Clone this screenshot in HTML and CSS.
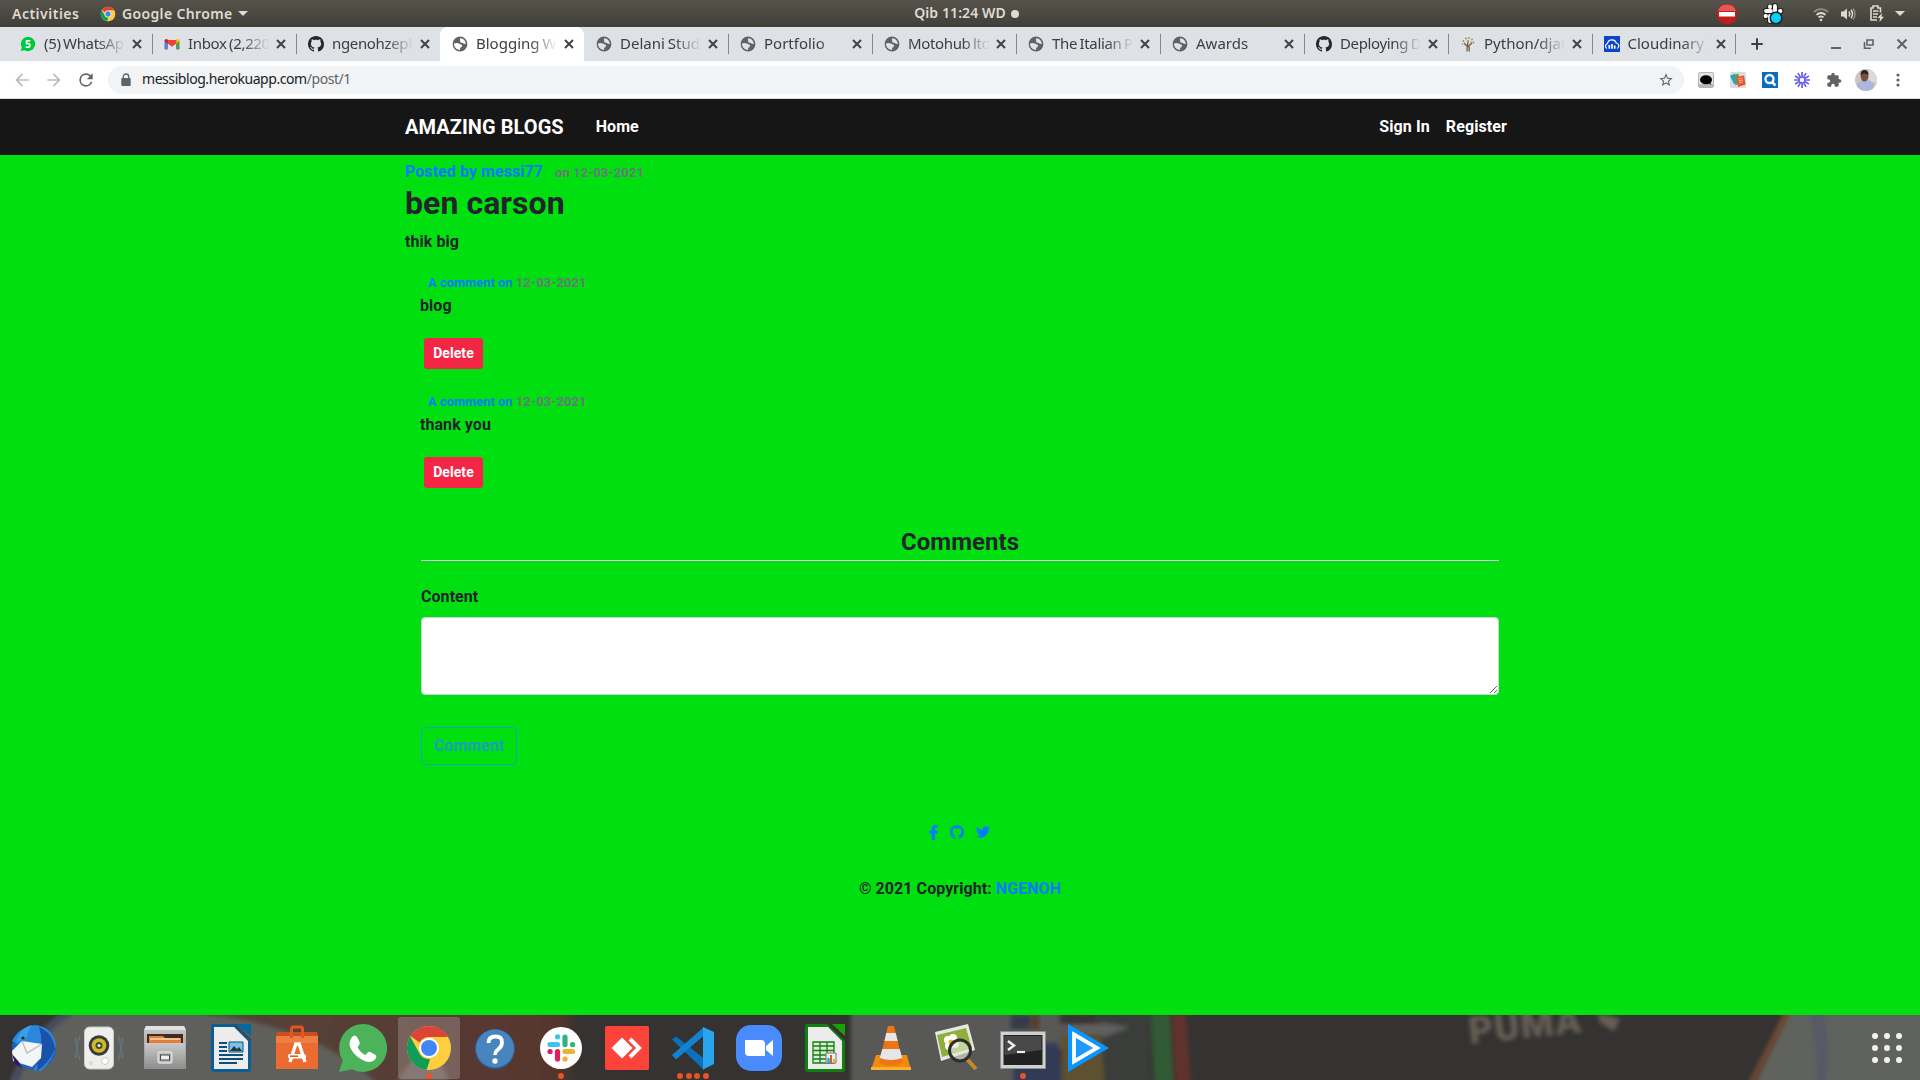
FILE: index.html
```html
<!DOCTYPE html>
<html lang="en">
<head>
<meta charset="utf-8">
<title>Blogging Website</title>
<link rel="stylesheet" href="styles.css">
</head>
<body>
<svg class="defs" width="0" height="0" aria-hidden="true">
  <defs>
    <symbol id="close" viewBox="0 0 16 16"><path d="M4 4l8 8M12 4l-8 8" stroke="currentColor" stroke-width="1.9" fill="none"/></symbol>
    <symbol id="globe" viewBox="0 0 16 16"><circle cx="8" cy="8" r="7.4" fill="#5f6368"/><path class="land" d="M8.6 2.2c2.7.2 5 2.500 5.200 5.300-.9.900-2 .4-2.600-.2-.8-.7-2.200-.4-2.900-1.300-.6-.8.100-1.500-.3-2.100-.2-.6.100-1.300.6-1.700zM1.900 7.600c1.700-.9 4.300-.8 5.500.2 1 .8 2.500.4 2.700 1.600.2 1.500-1.600 1.500-1.900 2.700-.2.800.2 1.500-.5 2C4.500 13.800 1.900 11 1.900 7.600z"/></symbol>
    <symbol id="github" viewBox="0 0 16 16"><path fill="currentColor" d="M8 0C3.58 0 0 3.58 0 8c0 3.54 2.29 6.53 5.47 7.59.4.07.55-.17.55-.38 0-.19-.01-.82-.01-1.49-2.01.37-2.53-.49-2.69-.94-.09-.23-.48-.94-.82-1.13-.28-.15-.68-.52-.01-.53.63-.01 1.08.58 1.23.82.72 1.21 1.87.87 2.33.66.07-.52.28-.87.51-1.07-1.78-.2-3.64-.89-3.64-3.95 0-.87.31-1.59.82-2.15-.08-.2-.36-1.02.08-2.12 0 0 .67-.21 2.2.82.64-.18 1.32-.27 2-.27.68 0 1.36.09 2 .27 1.53-1.04 2.2-.82 2.2-.82.44 1.1.16 1.92.08 2.12.51.56.82 1.27.82 2.15 0 3.07-1.87 3.75-3.65 3.95.29.25.54.73.54 1.48 0 1.07-.01 1.93-.01 2.2 0 .21.15.46.55.38A8.013 8.013 0 0016 8c0-4.42-3.58-8-8-8z"/></symbol>
    <symbol id="chrome" viewBox="0 0 48 48"><circle cx="24" cy="24" r="22" fill="#ffcd40"/><path d="M24 2a22 22 0 0 1 19.100 11H24a11 11 0 0 0-9.500 5.500L5.600 12A22 22 0 0 1 24 2z" fill="#db4437"/><path d="M5.200 12.600L14.500 29.500A11 11 0 0 0 25 35l-3 10.900A22 22 0 0 1 5.200 12.600z" fill="#0f9d58"/><path d="M33.500 29.500L25 46h-3.500l4.500-11z" fill="#ffcd40"/><circle cx="24" cy="24" r="10" fill="#fff"/><circle cx="24" cy="24" r="8" fill="#4285f4"/></symbol>
  </defs>
</svg>

<header class="topbar">
  <div class="topbar-left">
    <span class="activities">Activities</span>
    <svg class="ico16" viewBox="0 0 48 48"><use href="#chrome"/></svg>
    <span class="appname">Google Chrome</span>
    <i class="caret"></i>
  </div>
  <div class="clock"><span>Qib 11:24 WD</span><i class="dot"></i></div>
  <div class="tray">
    <svg class="t-stop" width="22" height="22" viewBox="0 0 22 22"><circle cx="11" cy="11" r="10.300" fill="#c41c1c"/><path d="M2 8a9.500 9.500 0 0 1 18 0z" fill="#e35a55"/><rect x="3" y="9" width="16" height="4.500" fill="#fff"/></svg>
    <svg class="t-slack" width="22" height="22" viewBox="0 0 22 22"><g stroke="#222" stroke-width="6" stroke-linecap="round"><path d="M4 8h5M8 4v1M13 3v5M18 8h.5M4 13h.5M8 13v5"/></g><g stroke="#fff" stroke-width="3.800" stroke-linecap="round"><path d="M4 8h5M8 3.500v.5M13 3v5M18 8h.5M3.500 13h.5M8 13v5"/></g><circle cx="14" cy="15" r="5.800" fill="#00d2ff" stroke="#222" stroke-width="1.500"/></svg>
    <svg class="t-wifi" width="16" height="16" viewBox="0 0 16 16" fill="none" stroke="#dfdbd2" stroke-width="1.800"><path d="M1 6a10 10 0 0 1 14 0" opacity=".45"/><path d="M3.500 8.800a6.500 6.500 0 0 1 9 0M5.500 11.400a4 4 0 0 1 5 0"/><circle cx="8" cy="14" r="1.300" fill="#dfdbd2" stroke="none"/></svg>
    <svg class="t-sound" width="16" height="16" viewBox="0 0 16 16" fill="none" stroke="#dfdbd2" stroke-width="1.500"><path d="M1 5.500h2.500L7 2.500v11l-3.500-3H1z" fill="#dfdbd2" stroke="none"/><path d="M9 5.500q1.600 2.500 0 5M11 3.800q3 4.200 0 8.400"/><path d="M13 2.500q4 5.500 0 11" opacity=".45"/></svg>
    <svg class="t-batt" width="16" height="17" viewBox="0 0 16 17" fill="none" stroke="#dfdbd2" stroke-width="1.600"><path d="M8 15H2V3h2V1h5v2h2.500v4.500M4 6h5.500M4 9h5M4 12h4"/><path d="M13 8l-4.500 5h2.500l-.5 4 4.500-5.200h-2.500z" fill="#dfdbd2" stroke="none"/></svg>
    <i class="caret"></i>
  </div>
</header>

<nav class="tabs">
  <div class="tab"><svg class="fav" viewBox="0 0 16 16"><path d="M8 .8a7.200 7.200 0 1 1-3.500 13.500L.8 15l1-3.400A7.200 7.200 0 0 1 8 .8z" fill="#00c843"/><text x="8" y="11.800" text-anchor="middle" font-size="10.500" font-weight="700" font-family="Noto Sans, sans-serif" fill="#fff">5</text></svg><span class="title tight">(5) WhatsAp</span><svg class="x"><use href="#close"/></svg></div>
  <div class="tab"><svg class="fav" viewBox="0 0 16 16"><path d="M.7 4v9.200h3V7.500L8 10.700l4.300-3.200v5.700h3V4z" fill="#ea4335"/><path d="M.7 6v7.200h3V7.500z" fill="#4285f4"/><path d="M12.300 7.500v5.700h3V5.500z" fill="#34a853"/><path d="M12.300 3.400v4.100l3-2.200V4.200q-1.200-2-3-.8z" fill="#fbbc04"/><path d="M.7 4.200v1.300l3 2V3.400q-1.800-1.200-3 .8z" fill="#c5221f"/></svg><span class="title tight">Inbox (2,220</span><svg class="x"><use href="#close"/></svg></div>
  <div class="tab noline"><svg class="fav gh"><use href="#github"/></svg><span class="title tight">ngenohzeph</span><svg class="x"><use href="#close"/></svg></div>
  <div class="tab active noline"><svg class="fav"><use href="#globe"/></svg><span class="title">Blogging W</span><svg class="x"><use href="#close"/></svg></div>
  <div class="tab"><svg class="fav"><use href="#globe"/></svg><span class="title">Delani Stud</span><svg class="x"><use href="#close"/></svg></div>
  <div class="tab"><svg class="fav"><use href="#globe"/></svg><span class="title">Portfolio</span><svg class="x"><use href="#close"/></svg></div>
  <div class="tab"><svg class="fav"><use href="#globe"/></svg><span class="title tight">Motohub ltd</span><svg class="x"><use href="#close"/></svg></div>
  <div class="tab"><svg class="fav"><use href="#globe"/></svg><span class="title tight">The Italian P</span><svg class="x"><use href="#close"/></svg></div>
  <div class="tab"><svg class="fav"><use href="#globe"/></svg><span class="title">Awards</span><svg class="x"><use href="#close"/></svg></div>
  <div class="tab"><svg class="fav gh"><use href="#github"/></svg><span class="title tight">Deploying D</span><svg class="x"><use href="#close"/></svg></div>
  <div class="tab narrow"><svg class="fav" viewBox="0 0 16 16"><path d="M7 15.500l.3-5L4 7M7.500 10L8 5M8 10.500L12 7M9.300 15.500L9 10" stroke="#7b5a3c" stroke-width="1.300" fill="none"/><g fill="#8aa05f"><circle cx="3.500" cy="5" r="1"/><circle cx="6" cy="2.500" r="1"/><circle cx="9" cy="2" r="1"/><circle cx="12" cy="3.500" r="1"/><circle cx="13.500" cy="6.500" r="1"/><circle cx="8" cy="5" r="1"/><circle cx="2.500" cy="8" r=".8"/><circle cx="11" cy="6.300" r=".8"/></g></svg><span class="title">Python/djar</span><svg class="x"><use href="#close"/></svg></div>
  <div class="tab narrow"><svg class="fav" viewBox="0 0 16 16"><path d="M0 0h16v16H0z" fill="#0c45cc"/><path d="M3 12.500a2.700 2.700 0 0 1 .5-5A4.600 4.600 0 0 1 12.300 7a2.900 2.900 0 0 1 .9 5.500" fill="none" stroke="#fff" stroke-width="1.200"/><path d="M5.300 9v3.700M8 8v4.700M10.700 9.500v3.200" stroke="#fff" stroke-width="1.700"/></svg><span class="title">Cloudinary I</span><svg class="x"><use href="#close"/></svg></div>
  <svg class="newtab" width="16" height="16" viewBox="0 0 16 16"><path d="M8 2.300v11.400M2.300 8h11.400" stroke="#3c4043" stroke-width="2"/></svg>
  <div class="winbtns">
    <svg width="16" height="16" viewBox="0 0 16 16"><path d="M3 12h10" stroke="#5f6368" stroke-width="2"/></svg>
    <svg width="16" height="16" viewBox="0 0 16 16" fill="none" stroke="#5f6368" stroke-width="1.600"><path d="M6 4h6v5H6zM3.500 6v6.200H10"/></svg>
    <svg width="16" height="16" viewBox="0 0 16 16"><path d="M3.500 3.500l9 9M12.500 3.500l-9 9" stroke="#5f6368" stroke-width="2"/></svg>
  </div>
</nav>

<div class="toolbar">
  <svg class="nav" viewBox="0 0 24 24"><path fill="#babcbe" d="M20 11H7.830l5.590-5.590L12 4l-8 8 8 8 1.410-1.410L7.830 13H20v-2z"/></svg>
  <svg class="nav" viewBox="0 0 24 24"><path fill="#babcbe" d="M12 4l-1.410 1.410L16.170 11H4v2h12.170l-5.580 5.590L12 20l8-8z"/></svg>
  <svg class="nav" viewBox="0 0 24 24"><path fill="#5f6368" d="M17.650 6.350A7.958 7.958 0 0 0 12 4a8 8 0 1 0 7.730 10h-2.080A6 6 0 1 1 12 6c1.660 0 3.140.69 4.220 1.780L13 11h7V4l-2.350 2.350z"/></svg>
  <div class="omnibox">
    <svg class="lock" width="14" height="14" viewBox="0 0 14 14"><rect x="2.300" y="5" width="9.400" height="8" rx="1" fill="#5f6368"/><path d="M4.300 5.500V3.700a2.700 2.700 0 0 1 5.400 0v1.800" fill="none" stroke="#5f6368" stroke-width="1.300"/></svg>
    <span class="url">messiblog.herokuapp.com<span>/post/1</span></span>
    <svg class="star" viewBox="0 0 24 24"><path fill="#5f6368" d="M22 9.240l-7.190-.62L12 2 9.190 8.630 2 9.240l5.460 4.730L5.820 21 12 17.270 18.180 21l-1.630-7.030L22 9.240zM12 15.400l-3.760 2.270 1-4.280-3.320-2.880 4.380-.38L12 6.100l1.710 4.040 4.380.38-3.320 2.880 1 4.280L12 15.400z"/></svg>
  </div>
  <div class="exts">
    <svg viewBox="0 0 16 16"><rect x=".5" y=".5" width="15" height="15" rx="1.500" fill="#e2e2e2" stroke="#b5b5b5"/><path d="M1 12h14v3H1z" fill="#b9b9b9"/><ellipse cx="8" cy="7.700" rx="6" ry="4.500"/><path d="M10 10l2.500 3 .5-4z"/></svg>
    <svg viewBox="0 0 16 16"><rect width="16" height="16" rx="1.500" fill="#dcdcdc"/><path d="M0 4l5-2.500 2 9.500-3 1z" fill="#1ea0d8"/><path d="M3 3.500l5.500-2 1 9-4 3z" fill="#35b06a"/><path d="M6 5l8-1.500 1.500 9L8 15z" fill="#f05030"/><path d="M8 7l4.500-1M8.500 9l4.500-1M9 11l3.500-1" stroke="#ffc0b0" stroke-width=".9"/></svg>
    <svg viewBox="0 0 16 16"><path d="M0 0h16v16H0z" fill="#0a6ebd"/><circle cx="7.500" cy="7" r="4" fill="none" stroke="#fff" stroke-width="2.300"/><path d="M10 10l3.500 3.500" stroke="#fff" stroke-width="2.500"/></svg>
    <svg viewBox="0 0 16 16"><path d="M8 0v16M0 8h16M4 1.070l8 13.860M12 1.070l-8 13.860M1.070 4l13.860 8M1.070 12l13.860-8" stroke="#625df5" stroke-width="1.700"/><circle cx="8" cy="8" r="2.200" fill="#fff"/></svg>
    <svg viewBox="0 0 24 24"><path fill="#5f6368" d="M20.500 11H19V7c0-1.100-.9-2-2-2h-4V3.500a2.500 2.500 0 0 0-5 0V5H4c-1.100 0-2 .9-2 2v3.800h1.500a2.700 2.700 0 0 1 0 5.400H2V20c0 1.100.9 2 2 2h3.800v-1.500a2.700 2.700 0 0 1 5.400 0V22H17c1.100 0 2-.9 2-2v-4h1.500a2.500 2.500 0 0 0 0-5z"/></svg>
    <svg class="avatar" viewBox="0 0 22 22"><clipPath id="av"><circle cx="11" cy="11" r="11"/></clipPath><g clip-path="url(#av)"><path d="M0 0h22v22H0z" fill="#cfc4be"/><path d="M14 0h8v13h-8z" fill="#ded9d6"/><path d="M2 22V15l5-4 3 2 4-2 5 4v7z" fill="#a9b8dc"/><ellipse cx="9.500" cy="7" rx="3.900" ry="5.500" fill="#755045"/><path d="M5.500 6q0-5 4-5t4 5q-4-3-8 0z" fill="#2f2422"/></g></svg>
    <svg viewBox="0 0 16 16" fill="#5f6368"><circle cx="8" cy="3" r="1.600"/><circle cx="8" cy="8" r="1.600"/><circle cx="8" cy="13" r="1.600"/></svg>
  </div>
</div>

<main class="page">
  <nav class="navbar"><div class="container navrow">
    <a class="brand">AMAZING BLOGS</a><a class="home">Home</a>
    <div class="auth"><a>Sign In</a><a>Register</a></div>
  </div></nav>
  <div class="container">
    <article class="post">
      <p><a>Posted by messi77</a><small class="on">on 12-03-2021</small></p>
      <h1>ben carson</h1>
      <p>thik big</p>
    </article>
    <section class="comment">
      <p class="meta"><a>A comment on</a> <span>12-03-2021</span></p>
      <p class="body">blog</p>
      <button class="delete">Delete</button>
    </section>
    <section class="comment">
      <p class="meta"><a>A comment on</a> <span>12-03-2021</span></p>
      <p class="body">thank you</p>
      <button class="delete">Delete</button>
    </section>
    <form class="form">
      <h2>Comments</h2>
      <label for="content">Content</label>
      <textarea id="content"></textarea>
      <button type="button" class="submit">Comment</button>
    </form>
  </div>
  <footer>
    <div class="social">
      <svg width="9" height="15" viewBox="22 0 276 512" preserveAspectRatio="none"><path fill="currentColor" d="M279.140 288l14.220-92.660h-88.910v-60.130c0-25.350 12.420-50.060 52.240-50.060h40.420V6.260S260.430 0 225.360 0c-73.220 0-121.080 44.380-121.080 124.720v70.620H22.890V288h81.390v224h100.170V288z"/></svg>
      <svg width="14" height="14"><use href="#github"/></svg>
      <svg width="14" height="14" viewBox="0 0 512 512"><path fill="currentColor" d="M459.370 151.716c.325 4.548.325 9.097.325 13.645 0 138.720-105.583 298.558-298.558 298.558-59.452 0-114.680-17.219-161.137-47.106 8.447.974 16.568 1.299 25.340 1.299 49.055 0 94.213-16.568 130.274-44.832-46.132-.975-84.792-31.188-98.112-72.772 6.498.974 12.995 1.624 19.818 1.624 9.421 0 18.843-1.300 27.614-3.573-48.081-9.747-84.143-51.980-84.143-102.985v-1.299c13.969 7.797 30.214 12.670 47.431 13.319-28.264-18.843-46.781-51.005-46.781-87.391 0-19.492 5.197-37.360 14.294-52.954 51.655 63.675 129.300 105.258 216.365 109.807-1.624-7.797-2.599-15.918-2.599-24.040 0-57.828 46.782-104.934 104.934-104.934 30.213 0 57.502 12.670 76.670 33.137 23.715-4.548 46.456-13.320 66.599-25.340-7.798 24.366-24.366 44.833-46.132 57.827 21.117-2.273 41.584-8.122 60.426-16.243-14.292 20.791-32.161 39.308-52.628 54.253z"/></svg>
    </div>
    <p>© 2021 Copyright: <a>NGENOH</a></p>
  </footer>
</main>

<div class="dock">
  <svg class="wall" width="1920" height="65" viewBox="0 0 1920 65">
    <defs>
      <filter id="b2" x="-20%" y="-20%" width="140%" height="140%"><feGaussianBlur stdDeviation="2"/></filter>
      <filter id="b6" x="-20%" y="-40%" width="140%" height="180%"><feGaussianBlur stdDeviation="6"/></filter>
      <linearGradient id="rust"><stop offset="0" stop-color="#55433a"/><stop offset=".6" stop-color="#58372f"/><stop offset="1" stop-color="#3a322f"/></linearGradient>
    </defs>
    <path d="M0 0h1920v65H0z" fill="#353331"/>
    <path d="M220-10h500v85H220z" fill="url(#rust)" filter="url(#b6)"/>
    <path d="M68-4h120q130 14 190 73H10Q30 20 68-4z" fill="#5f605b" filter="url(#b2)"/>
    <path d="M72-4Q30 20 14 69" stroke="#45485f" stroke-width="7" fill="none" filter="url(#b2)"/>
    <path d="M395 69l35-49 20 49z" fill="#6a5752" filter="url(#b2)"/>
    <path d="M570-10h280v85H570z" fill="#353331" filter="url(#b6)"/>
    <path d="M851-5h240v32l-36 8v35H851z" fill="#585857" filter="url(#b2)"/>
    <path d="M1011 0h20v14h-20z" fill="#363a48" filter="url(#b2)"/><path d="M1031 0h8v14h-8z" fill="#583b2c" filter="url(#b2)"/>
    <path d="M1060-2h46v10q-22 4-46 0z" fill="#3b3331" filter="url(#b2)"/>
    <path d="M1094-5h56v80h-50z" fill="#3b3c3b" filter="url(#b2)"/>
    <path d="M1070 11l35-3 25 4-25 10h-35z" fill="#5f605e" filter="url(#b2)"/>
    <g filter="url(#b2)"><path d="M1012 28h46l4 40h-48z" fill="#303b56"/><path d="M1061 20h40l4 50h-43z" fill="#5d5130"/></g>
    <path d="M1150-2h21l4 70h-21z" fill="#335a35" filter="url(#b2)"/><path d="M1171-2h15l5 70h-16z" fill="#5e322d" filter="url(#b2)"/>
    <g fill="#6c6459" filter="url(#b2)" opacity=".9"><text x="1470" y="29" font-family="Roboto, sans-serif" font-weight="900" font-size="38" letter-spacing="1" transform="rotate(-6 1470 29)">PUMA</text><path d="M1598-2l22 6-6 12-14-8z"/></g>
    <path d="M1788-4h140v73h-174z" fill="#60625d" filter="url(#b2)"/>
    <path d="M1788-4l-37 73" stroke="#6f4830" stroke-width="6" filter="url(#b2)"/>
    <path d="M1808-4q10 30 8 73h10q4-35-2-73z" fill="#595866" filter="url(#b2)"/>
  </svg>
  <div class="apps">
    <div class="app"><svg viewBox="0 0 48 48"><circle cx="25" cy="24" r="22" fill="#1d63c0"/><path d="M3 17Q10 3 26 1q18 2 21 20-3 16-15 26l-8-1 10-12z" fill="#2b86dc"/><path d="M30 3q14 6 16 22-6 14-18 22 2-10-2-12 10-14 4-32z" fill="#1853a8"/><path d="M3 27l10-10 20 3-1 14-9 9-19-6z" fill="#f4f5f7"/><path d="M13 17l5 12 15-9" fill="none" stroke="#b9bcc4" stroke-width="1.300"/><path d="M7 19Q11 4 23 1l-4 7q0 8-9 9z" fill="#37a0e6"/><path d="M3 30l3 10 7 4-3-6z" fill="#2a1a6a"/><circle cx="14" cy="14" r="1.600" fill="#222"/></svg></div>
    <div class="app"><svg viewBox="0 0 48 48"><path d="M5 12q-6 12 0 24M1 14q-3 10 0 20M43 12q6 12 0 24M47 14q3 10 0 20" stroke="#61809c" fill="none" stroke-width="1.500" opacity=".7"/><rect x="9.500" y="3" width="29" height="42" rx="5" fill="#eeeeec" stroke="#c9c9c6"/><circle cx="24" cy="21.500" r="10.300" fill="#393c3c"/><circle cx="24" cy="21.500" r="7.300" fill="#d1b92d"/><circle cx="24" cy="21.500" r="3.500" fill="#4a4a30"/><circle cx="24" cy="21.500" r="1.600" fill="#e8e8d8"/><circle cx="30" cy="37" r="3.500" fill="#fff" stroke="#bbb" stroke-width=".8"/><rect x="14" y="37" width="4" height="4" fill="#dcdcda"/></svg></div>
    <div class="app"><svg viewBox="0 0 48 48"><defs><linearGradient id="cab" x2="0" y2="1"><stop offset="0" stop-color="#c9c9c9"/><stop offset="1" stop-color="#8d8d8d"/></linearGradient></defs><path d="M5 2h38l2 5v38H3V7z" fill="url(#cab)"/><path d="M5 2h38l2 4H3z" fill="#e2e2e2"/><path d="M6 10h36v12H6z" fill="#3d2b24"/><path d="M8 12h14l2 2h16v8H8z" fill="#e07f35"/><path d="M9 15h30" stroke="#f9d9b0" stroke-width="1.500"/><path d="M4 19h40v26H4z" fill="url(#cab)"/><rect x="17" y="28" width="14" height="11" rx="2" fill="#bbb" stroke="#ddd" stroke-width="1.300"/><rect x="19.500" y="31" width="9" height="5" fill="#eee" stroke="#444"/></svg></div>
    <div class="app"><svg viewBox="0 0 48 48"><path d="M6 0h22l16 16v29q0 3-3 3H7q-3 0-3-3V3q0-3 2-3z" fill="#0b5e93"/><path d="M7 3h20l14 14v28H7z" fill="#ececec"/><path d="M28 0h16v12z" fill="#0369a3"/><path d="M27 0l17 16" stroke="#444" stroke-width="1.500"/><path d="M12 19h8M12 23h8M12 27h8M12 31h24M12 35h24M12 39h18" stroke="#0c5079" stroke-width="1.900"/><path d="M22 18h14v10H22z" fill="#77c5ef" stroke="#0c5079"/><path d="M23 27l4-5 3 3 2-2 3 4z" fill="#333"/></svg></div>
    <div class="app"><svg viewBox="0 0 48 48"><path d="M3 11h42v34H3z" fill="#ec6b30"/><path d="M3 11h42v8H3z" fill="#f08a4e" opacity=".6"/><path d="M4 8h40l1 4H3z" fill="#c94f20"/><path d="M18.500 14V5q0-2 2-2h7q2 0 2 2v9" fill="none" stroke="#e3571f" stroke-width="3"/><path d="M17 38l5.800-18h3.400L32 38" fill="none" stroke="#fff" stroke-width="3.400"/><rect x="15" y="30" width="18" height="4.500" rx="2" fill="#fff"/><path d="M17 32.200h8" stroke="#d9541e" stroke-width="1.500"/></svg></div>
    <div class="app"><svg viewBox="0 0 48 48"><path d="M24 0a24 24 0 1 1-11 45.300L0 48l3.600-11.500A24 24 0 0 1 24 0z" fill="#4db35a"/><path d="M13 13q3-3 5 0l2.500 5q1 2-2 5 3 6 8 8 3-4 5-3l5 3q2 2-1 5-5 4-12 0-11-6-13-15 0-5 2.500-8z" fill="#fff"/></svg></div>
    <div class="app current"><svg viewBox="0 0 48 48"><use href="#chrome"/></svg><div class="dots"><i></i></div></div>
    <div class="app"><svg viewBox="0 0 48 48"><circle cx="24" cy="25" r="20" fill="#2d5f96"/><circle cx="24" cy="24.500" r="19" fill="#4884bd"/><path d="M17.500 19q0-6.500 7-6.500t6.500 6q0 4-3.500 6.500t-3.200 6" fill="none" stroke="#fff" stroke-width="3.800"/><circle cx="24" cy="37" r="2.700" fill="#fff"/></svg></div>
    <div class="app"><svg viewBox="0 0 48 48"><circle cx="24" cy="24" r="21" fill="#fff"/><g stroke-width="5.200" stroke-linecap="round"><path d="M13 20.500h7.500M20.500 12.800h.1" stroke="#36c5f0"/><path d="M28 13v7.500M35.500 20.500h.1" stroke="#2eb67d"/><path d="M28 27.500h7.500M28 35h.1" stroke="#ecb22e"/><path d="M20.500 27.500V35M13 27.500h.1" stroke="#e01e5a"/></g></svg><div class="dots"><i></i></div></div>
    <div class="app"><svg viewBox="0 0 48 48"><rect x="2" y="2" width="44" height="44" rx="2" fill="#fc443b"/><path d="M19 13.500L29.500 24 19 34.500 8.500 24z" fill="#fff"/><path d="M27 15l9 9-9 9" fill="none" stroke="#fff" stroke-width="4"/></svg></div>
    <div class="app"><svg viewBox="0 0 48 48"><path d="M3 15.500l4-3 28 22V46z" fill="#0a72bd"/><path d="M3 31l4 4.500 28-24V3z" fill="#1383cf"/><path d="M34 3l11 5v32l-11 5.500z" fill="#29a5ee"/></svg><div class="dots"><i></i><i></i><i></i><i></i></div></div>
    <div class="app"><svg viewBox="0 0 48 48"><rect x="1" y="1" width="46" height="46" rx="15" fill="#4a8cff"/><path d="M10 16h16q4 0 4 4v12H14q-4 0-4-4z" fill="#fff"/><path d="M31 22l7-6v16l-7-6z" fill="#fff"/></svg></div>
    <div class="app"><svg viewBox="0 0 48 48"><path d="M6 0h22l16 16v29q0 3-3 3H7q-3 0-3-3V3q0-3 2-3z" fill="#118011"/><path d="M7 3h20l14 14v28H7z" fill="#ececec"/><path d="M31 0h13v12z" fill="#18a303"/><path d="M27 0l17 16" stroke="#333" stroke-width="1.500"/><path d="M12 18h21v21H12zM12 22h21M12 26.500h21M12 31h21M12 35h21M19 18v21M26 18v21" fill="#d6f0d0" stroke="#187a18" stroke-width="1.300"/><path d="M25 29h10v10H25z" fill="#eee" stroke="#777"/><path d="M27.500 34v5" stroke="#29a0e0" stroke-width="2.500"/><path d="M30 31v8" stroke="#d86020" stroke-width="2"/><path d="M33 35v4" stroke="#f0b020" stroke-width="2"/></svg></div>
    <div class="app"><svg viewBox="0 0 48 48"><path d="M9 31h31l4 15H4z" fill="#f08a10"/><path d="M4 43h40v3H4z" fill="#ffb030"/><path d="M21 2h6l9 37q-12 5-24 0z" fill="#ee7512"/><path d="M19.300 9h9.400l2 8H17.500zM15.300 25h17.400l2.600 9q-11 4-22.600 0z" fill="#e4e6e8"/></svg></div>
    <div class="app"><svg viewBox="0 0 48 48"><path d="M2 8l33-8 7 26-34 11z" fill="#e8e8e3"/><path d="M4 11l29-7 6 20-30 9z" fill="#8fae3c"/><g fill="#fff"><circle cx="15" cy="16" r="4"/><circle cx="20" cy="14" r="4"/><circle cx="16" cy="22" r="4"/><circle cx="22" cy="20" r="4"/></g><circle cx="18" cy="18" r="2.500" fill="#e0b820"/><path d="M33 34l10 11" stroke="#c98828" stroke-width="4"/><circle cx="27" cy="26.500" r="10.500" fill="#dfe7cf" fill-opacity=".65" stroke="#2c2e2e" stroke-width="3"/></svg></div>
    <div class="app"><svg viewBox="0 0 48 48"><path d="M1.500 7.500h45v37h-45z" fill="#d0d0d0" stroke="#8f8f8f"/><path d="M4.500 11h39v30h-39z" fill="#222"/><path d="M5.500 12h37v14l-37 5z" fill="#484848"/><path d="M9 17l6 4.500L9 26" fill="none" stroke="#eee" stroke-width="2.500"/><path d="M18 28h8" stroke="#eee" stroke-width="2.200"/></svg><div class="dots"><i></i></div></div>
    <div class="app"><svg viewBox="0 0 48 48"><path d="M3 0l41 24L3 48z" fill="#0a96ff"/><path d="M9 10.500L32 24 9 37.500z" fill="#1c9aff" stroke="#fff" stroke-width="3.800"/></svg></div>
    <div class="launcher"><i></i><i></i><i></i><i></i><i></i><i></i><i></i><i></i><i></i></div>
  </div>
</div>
</body>
</html>
```
FILE: styles.css
```css
* { box-sizing: border-box; }
html, body { margin: 0; height: 100%; overflow: hidden; }
body { display: flex; flex-direction: column; width: 1920px; height: 1080px; font-family: "Noto Sans", sans-serif; }
svg { display: block; flex: none; }
p, h1, h2 { margin: 0; }
.defs { position: absolute; }

/* desktop top bar */
.topbar { display: grid; grid-template-columns: 1fr auto 1fr; height: 27px; align-items: center; background: linear-gradient(#56534b, #413f3a); color: #dfdbd2; font: 600 14px/26px "Noto Sans", sans-serif; }
.topbar-left { display: flex; align-items: center; padding-left: 12px; }
.activities { width: 88px; letter-spacing: .5px; }
.ico16 { width: 16px; height: 16px; }
.appname { margin-left: 6px; width: 111px; white-space: nowrap; letter-spacing: .35px; }
.caret { border: 5px solid transparent; border-top-color: #dfdbd2; border-bottom: 0; margin-left: 5px; }
.clock { display: flex; align-items: center; gap: 5px; margin-left: 13px; letter-spacing: .1px; }
.clock span { margin-top: -1px; }
.dot { width: 8px; height: 8px; border-radius: 50%; background: #dfdbd2; }
.tray { display: flex; align-items: center; justify-content: flex-end; padding-right: 15px; }
.t-slack { margin-left: 24px; }
.t-wifi { margin-left: 29px; }
.t-sound { margin-left: 11px; }
.t-batt { margin-left: 13px; }
.tray .caret { margin-left: 10px; }

/* tab strip */
.tabs { display: flex; align-items: stretch; height: 34px; padding-left: 8px; background: #dee1e6; color: #3c4043; }
.tab { --land: #dee1e6; position: relative; display: flex; align-items: center; width: 144px; padding-left: 12px; flex: none; }
.tab.narrow { width: 143.5px; }
.tab::after { content: ""; position: absolute; right: -1px; top: 7px; width: 1px; height: 20px; background: #85888c; }
.tab.noline::after { display: none; }
.tab.active { --land: #fff; background: #fff; border-radius: 8px 8px 0 0; }
.fav { width: 16px; height: 16px; }
.gh { color: #24292e; }
.land { fill: var(--land); }
.title { width: 82px; margin: -2px 0 0 8px; white-space: nowrap; font-size: 15px; line-height: 20px; word-spacing: -1px; -webkit-mask-image: linear-gradient(90deg, #000 66%, transparent 99%); mask-image: linear-gradient(90deg, #000 66%, transparent 99%); }
.tight { letter-spacing: -.35px; }
.x { width: 16px; height: 16px; margin-left: 3px; }
.newtab { align-self: center; margin-left: 14px; }
.winbtns { display: flex; align-items: center; gap: 17px; margin-left: auto; padding-right: 10px; }

/* address bar */
.toolbar { display: flex; align-items: center; height: 38px; padding-left: 12px; gap: 12px; background: #fff; border-bottom: 1px solid #dcdee1; }
.nav { width: 20px; height: 20px; }
.omnibox { display: flex; align-items: center; width: 1576px; height: 28px; border-radius: 14px; background: #f1f3f4; padding: 0 10px 0 11px; }
.url { margin: -2px 0 0 9px; font-size: 14px; letter-spacing: -.44px; color: #202124; }
.url span { color: #5f6368; }
.star { width: 16px; height: 16px; margin-left: auto; }
.exts { display: flex; align-items: center; gap: 16px; margin-left: 2px; }
.exts svg { width: 16px; height: 16px; }
.exts .avatar { width: 22px; height: 22px; margin: 0 -3px; }

/* blog page */
.page { height: 916px; background: #00e010; color: #212529; font: 700 16px/24px Roboto, sans-serif; letter-spacing: .06px; }
.page a { color: #007bff; }
.container { width: 1140px; margin: 0 auto; padding: 0 15px; }
.navbar { height: 56px; background: #161616; }
.navrow { display: flex; align-items: center; height: 56px; }
.page .navbar a { color: #fff; }
.page .brand { font-size: 20px; margin-right: 32px; }
.auth { display: flex; gap: 16px; margin-left: auto; padding-right: 8px; letter-spacing: .1px; }
.post { padding-top: 5px; }
.on { font-size: 12.8px; color: #6c757d; margin-left: 12px; letter-spacing: .2px; }
h1 { font-size: 32px; line-height: 38.4px; margin: -1px 0 8px; }
.comment { padding: 17px 0 0 15px; height: 119px; }
.meta { padding-left: 8px; font-size: 12.8px; }
.meta span { color: #6c757d; letter-spacing: .2px; }
.body { margin-top: -1px; }
.delete { display: block; margin: 20px 0 0 4px; width: 59px; height: 31px; padding: 0; border: 0; border-radius: 3.2px; background: #f32745; color: #fff; font: 700 14px/21px Roboto, sans-serif; letter-spacing: .06px; }
.form { display: flex; flex-direction: column; align-items: flex-start; padding: 36px 16px 0; }
h2 { align-self: stretch; height: 33px; border-bottom: 1px solid #dee2e6; text-align: center; font-size: 24px; line-height: 28.8px; margin-bottom: 24px; }
textarea { width: 100%; height: 78px; margin: 8px 0 32px; border: 1px solid #ced4da; border-radius: 4px; background: #fff; resize: vertical; }
.submit { width: 96px; height: 38px; padding: 0 0 1px; border: 1px solid #17a2b8; border-radius: 4px; background: none; color: #17a2b8; font: 700 16px/24px Roboto, sans-serif; }
footer { text-align: center; }
.social { display: flex; justify-content: center; align-items: center; gap: 12px; height: 24px; margin: 55px 0 33px; padding-right: 1px; color: #007bff; }

/* dock */
.dock { position: relative; height: 65px; overflow: hidden; }
.wall { position: absolute; inset: 0; }
.apps { position: relative; display: flex; gap: 4px; padding: 2px 0 1px 2px; height: 65px; }
.app { display: flex; flex-direction: column; align-items: center; width: 62px; height: 62px; padding-top: 7px; }
.app svg { width: 48px; height: 48px; }
.current { background: rgba(255, 255, 255, .2); border-radius: 3px; }
.dots { display: flex; gap: 2.500px; margin-top: 1px; }
.dots i { width: 6px; height: 6px; border-radius: 50%; background: #e95420; }
.launcher { display: grid; grid-template-columns: repeat(3, 6px); gap: 6px; align-content: center; margin: 0 18px 0 auto; }
.launcher i { width: 6px; height: 6px; border-radius: 50%; background: #f2f2f0; }
```
